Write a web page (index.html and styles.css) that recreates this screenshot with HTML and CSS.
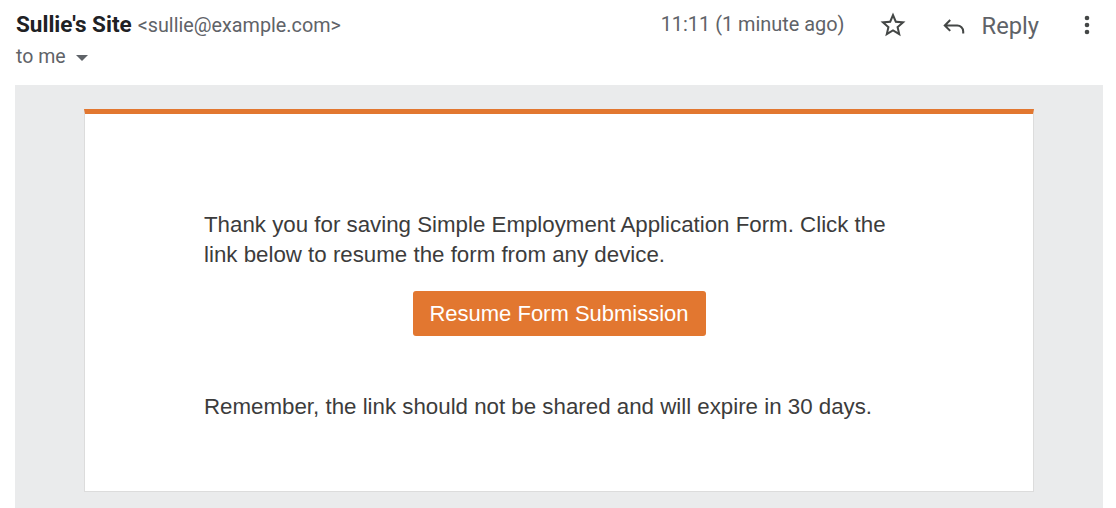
FILE: index.html
```html
<!DOCTYPE html>
<html>
<head>
<meta charset="utf-8">
<link rel="stylesheet" href="styles.css">
</head>
<body>
<div class="header">
  <div class="from">
    <div class="sender"><span class="name">Sullie's Site</span> <span class="email">&lt;sullie@example.com&gt;</span></div>
    <div class="to">to me <svg class="caret" width="12" height="6" viewBox="0 0 10 5"><path d="M0 0h10L5 5z" fill="#5f6368"/></svg></div>
  </div>
  <div class="actions">
    <span class="time">11:11 (1 minute ago)</span>
    <svg class="star" width="30" height="30" viewBox="0 0 24 24"><path d="M22 9.24l-7.19-.62L12 2 9.19 8.63 2 9.24l5.46 4.73L5.82 21 12 17.27 18.18 21l-1.63-7.03L22 9.24zM12 15.4l-3.76 2.27 1-4.28-3.32-2.88 4.38-.38L12 6.1l1.71 4.04 4.38.38-3.32 2.88 1 4.28L12 15.4z" fill="#444746"/></svg>
    <span class="reply">
      <svg width="26" height="26" viewBox="0 0 24 24"><path d="M8.5 6.5 3.5 11.5 8.5 16.5M3.5 11.5H15a5.5 5.5 0 0 1 5.5 5.5V19" fill="none" stroke="#444746" stroke-width="1.9"/></svg>
      <span>Reply</span>
    </span>
    <svg class="more" width="6" height="20" viewBox="0 0 6 20"><circle cx="3" cy="3" r="2.3" fill="#444746"/><circle cx="3" cy="10" r="2.3" fill="#444746"/><circle cx="3" cy="17" r="2.3" fill="#444746"/></svg>
  </div>
</div>
<div class="mailbody">
  <div class="card">
    <div class="inner">
      <p class="msg">Thank you for saving Simple Employment Application Form. Click the link below to resume the form from any device.</p>
      <div class="btnrow"><a class="btn">Resume Form Submission</a></div>
      <p class="note">Remember, the link should not be shared and will expire in 30 days.</p>
    </div>
  </div>
</div>
</body>
</html>
```
FILE: styles.css
```css
html, body {
  margin: 0;
  padding: 0;
  background: #ffffff;
}
body {
  font-family: Roboto, "Liberation Sans", Arial, sans-serif;
  color: #202124;
  width: 1116px;
  height: 508px;
  overflow: hidden;
}
.header {
  display: flex;
  justify-content: space-between;
  align-items: flex-start;
  padding: 0 26px 0 16px;
  height: 85px;
}
.from {
  padding-top: 9px;
}
.sender {
  line-height: 30px;
  white-space: nowrap;
}
.name {
  font-weight: 700;
  font-size: 22.5px;
  color: #202124;
}
.email {
  font-size: 19.8px;
  color: #5f6368;
  margin-left: 2px;
}
.to {
  margin-top: 0;
  font-size: 19.5px;
  color: #5f6368;
  line-height: 30px;
  display: flex;
  align-items: center;
}
.caret {
  margin-left: 10px;
  margin-top: 1px;
}
.actions {
  display: flex;
  align-items: center;
  height: 50px;
}
.time {
  font-size: 19.9px;
  color: #5f6368;
  margin-right: 33px;
  margin-top: -1px;
}
.star {
  margin-right: 33px;
}
.reply {
  display: flex;
  align-items: center;
  font-size: 23.7px;
  color: #5f6368;
  margin-right: 45px;
  margin-top: 1px;
}
.reply span {
  margin-left: 15px;
}
.mailbody {
  margin: 0 13px 0 15px;
  background: #eaebec;
  padding: 24px 69px 15px 69px;
  box-sizing: border-box;
  height: 423px;
}
.card {
  background: #ffffff;
  border-top: 5px solid #e27730;
  border-left: 1px solid #dcdcdc;
  border-right: 1px solid #dcdcdc;
  border-bottom: 1px solid #dcdcdc;
  height: 383px;
  box-sizing: border-box;
  display: flex;
  justify-content: center;
}
.inner {
  width: 710px;
  padding-top: 96px;
  font-family: "Liberation Sans", Arial, sans-serif;
  font-size: 22.3px;
  line-height: 30px;
  color: #3c3c3c;
}
.msg, .note {
  margin: 0;
}
.btnrow {
  display: flex;
  justify-content: center;
  margin: 21px 0 56px;
}
.btn {
  display: block;
  background: #e27730;
  color: #ffffff;
  border-radius: 3px;
  width: 293px;
  height: 45px;
  line-height: 45px;
  text-align: center;
  font-size: 22px;
  text-decoration: none;
}
```
